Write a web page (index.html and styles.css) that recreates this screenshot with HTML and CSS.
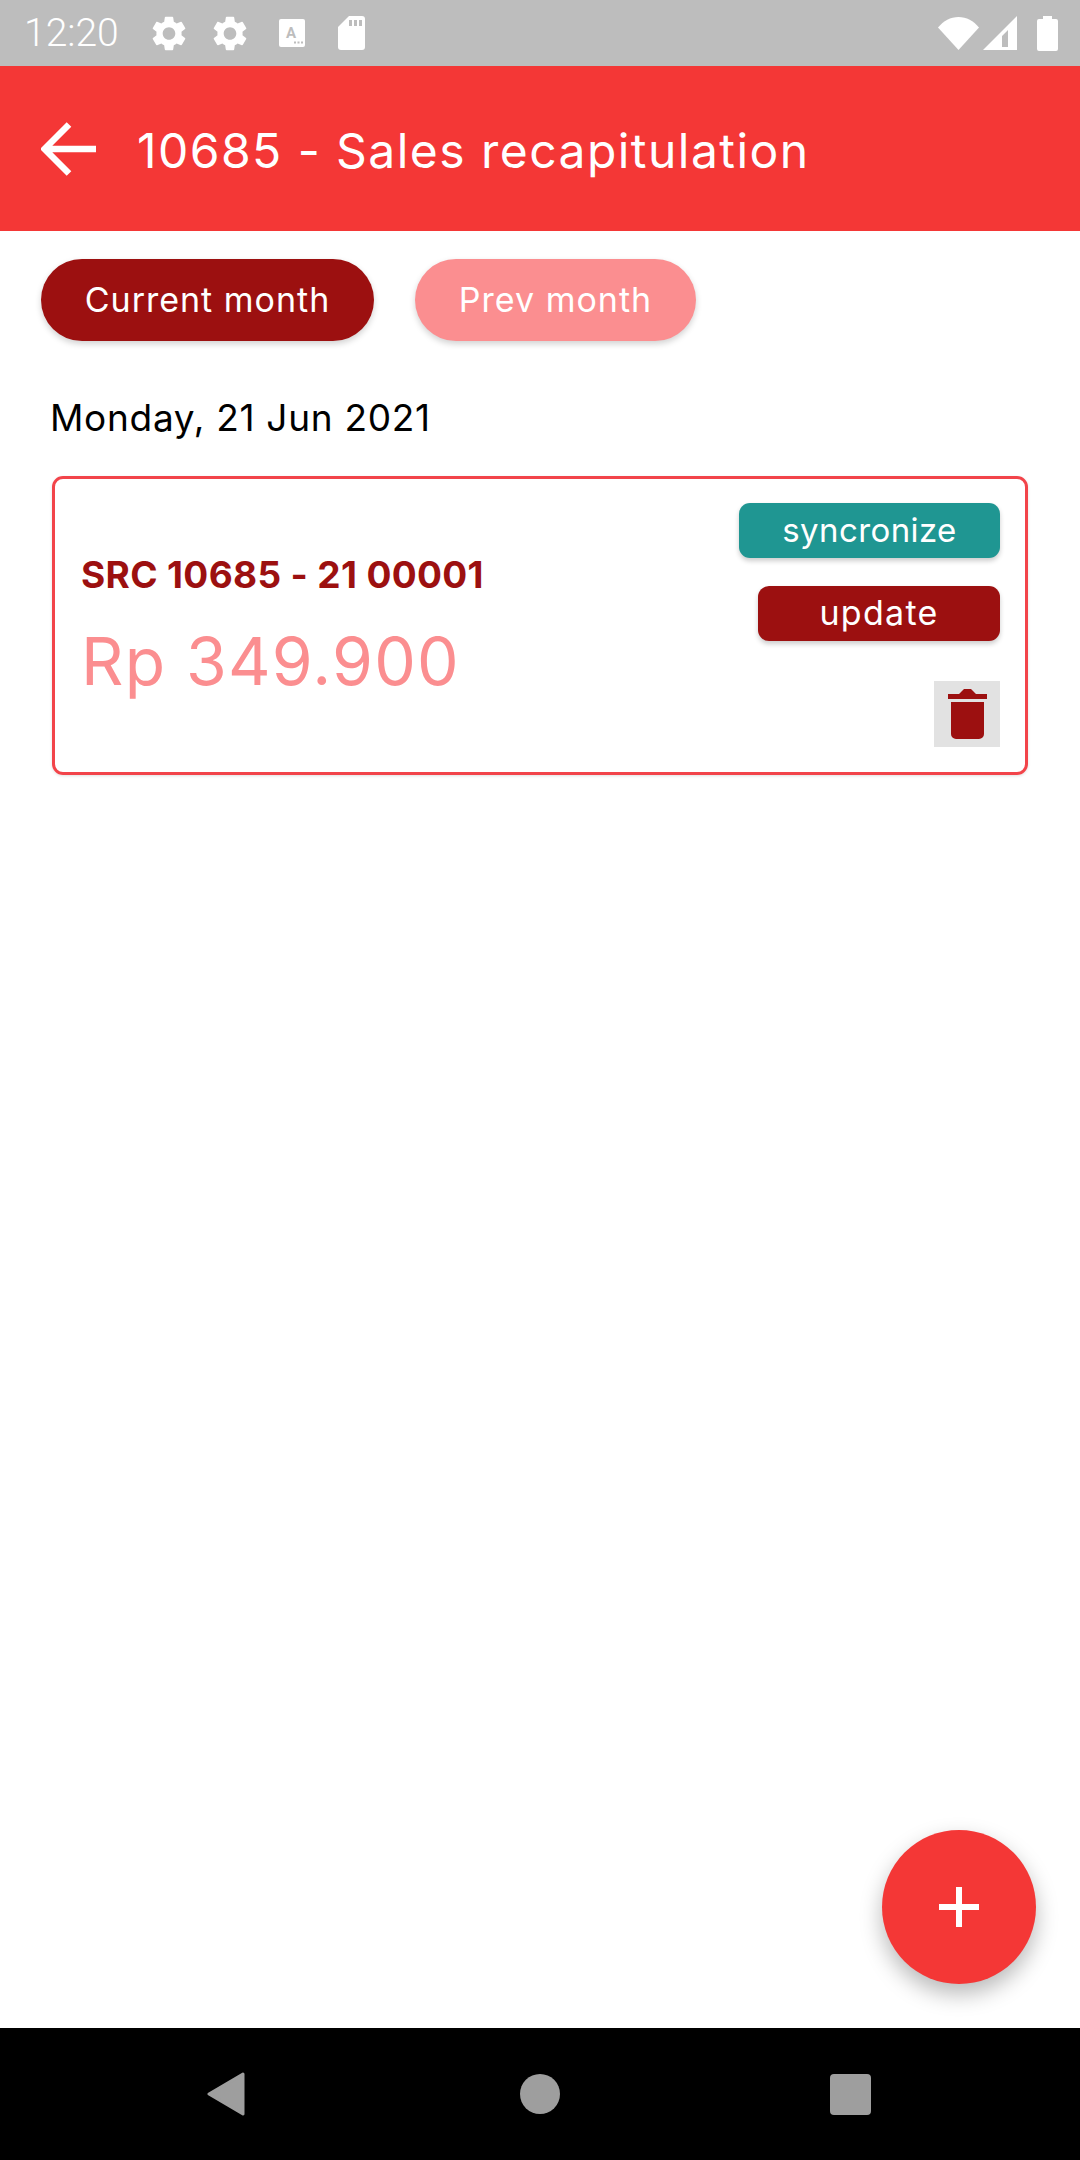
FILE: index.html
```html
<!DOCTYPE html>
<html lang="en">
<head>
<meta charset="utf-8">
<title>Sales recapitulation</title>
<link rel="stylesheet" href="styles.css">
</head>
<body>
<div class="screen">
  <header class="status">
    <span class="clock">12:20</span>
    <svg class="ico gear gear-a" viewBox="2.4 2 19.2 20"><path fill-rule="evenodd" d="M19.14 12.94c.04-.3.06-.61.06-.94 0-.32-.02-.64-.07-.94l2.03-1.58a.49.49 0 0 0 .12-.61l-1.92-3.32a.488.488 0 0 0-.59-.22l-2.39.96c-.5-.38-1.03-.7-1.62-.94l-.36-2.54a.484.484 0 0 0-.48-.41h-3.84c-.24 0-.43.17-.47.41l-.36 2.54c-.59.24-1.13.57-1.62.94l-2.39-.96c-.22-.08-.47 0-.59.22L2.74 8.87c-.12.21-.08.47.12.61l2.03 1.58c-.05.3-.09.63-.09.94s.02.64.07.94l-2.03 1.58a.49.49 0 0 0-.12.61l1.92 3.32c.12.22.37.29.59.22l2.39-.96c.5.38 1.03.7 1.62.94l.36 2.54c.05.24.24.41.48.41h3.84c.24 0 .44-.17.47-.41l.36-2.54c.59-.24 1.13-.56 1.62-.94l2.39.96c.22.08.47 0 .59-.22l1.92-3.32c.12-.22.07-.47-.12-.61l-2.01-1.58zM12 15.6c-1.98 0-3.6-1.62-3.6-3.6s1.62-3.6 3.6-3.6 3.6 1.62 3.6 3.6-1.62 3.6-3.6 3.6z"/></svg>
    <svg class="ico gear gear-b" viewBox="2.4 2 19.2 20"><path fill-rule="evenodd" d="M19.14 12.94c.04-.3.06-.61.06-.94 0-.32-.02-.64-.07-.94l2.03-1.58a.49.49 0 0 0 .12-.61l-1.92-3.32a.488.488 0 0 0-.59-.22l-2.39.96c-.5-.38-1.03-.7-1.62-.94l-.36-2.54a.484.484 0 0 0-.48-.41h-3.84c-.24 0-.43.17-.47.41l-.36 2.54c-.59.24-1.13.57-1.62.94l-2.39-.96c-.22-.08-.47 0-.59.22L2.74 8.87c-.12.21-.08.47.12.61l2.03 1.58c-.05.3-.09.63-.09.94s.02.64.07.94l-2.03 1.58a.49.49 0 0 0-.12.61l1.92 3.32c.12.22.37.29.59.22l2.39-.96c.5.38 1.03.7 1.62.94l.36 2.54c.05.24.24.41.48.41h3.84c.24 0 .44-.17.47-.41l.36-2.54c.59-.24 1.13-.56 1.62-.94l2.39.96c.22.08.47 0 .59-.22l1.92-3.32c.12-.22.07-.47-.12-.61l-2.01-1.58zM12 15.6c-1.98 0-3.6-1.62-3.6-3.6s1.62-3.6 3.6-3.6 3.6 1.62 3.6 3.6-1.62 3.6-3.6 3.6z"/></svg>
    <svg class="ico font-ico" viewBox="0 0 26 28"><rect width="26" height="28" rx="2"/><text class="font-a" x="12" y="19">A</text><rect class="cut" x="15" y="22.5" width="2" height="2"/><rect class="cut" x="18.5" y="22.5" width="2" height="2"/><rect class="cut" x="22" y="22.5" width="2" height="2"/></svg>
    <svg class="ico sd-ico" viewBox="0 0 27 34"><path d="M11 0h13a3 3 0 0 1 3 3v28a3 3 0 0 1-3 3H3a3 3 0 0 1-3-3V11z"/><rect class="cut" x="11" y="4" width="3" height="6"/><rect class="cut" x="16" y="4" width="3" height="6"/><rect class="cut" x="21" y="4" width="3" height="6"/></svg>
    <span class="status-gap"></span>
    <svg class="ico wifi-ico" viewBox="0 0 41 33"><path d="M0 10.5C5.5 4 12.5 0 20.5 0S35.5 4 41 10.5L20.5 33z"/></svg>
    <svg class="ico signal-ico" viewBox="0 0 34 34"><path fill-rule="evenodd" d="M34 0v34H0zM25 14l-6 6v11h6z"/></svg>
    <svg class="ico battery-ico" viewBox="0 0 21 35"><path d="M6 0h9v3h4a2 2 0 0 1 2 2v28a2 2 0 0 1-2 2H2a2 2 0 0 1-2-2V5a2 2 0 0 1 2-2h4z"/></svg>
  </header>

  <div class="appbar">
    <svg class="back" viewBox="0 0 55 54"><path d="M55 27H5M28 2.500 3.500 27 28 51.500"/></svg>
    <h1 class="title">10685 - Sales recapitulation</h1>
  </div>

  <main class="content">
    <div class="tabs">
      <button class="tab tab-on">Current month</button>
      <button class="tab tab-off">Prev month</button>
    </div>
    <p class="date">Monday, 21 Jun 2021</p>
    <section class="card">
      <div class="card-info">
        <div class="code">SRC 10685 - 21 00001</div>
        <div class="price">Rp 349.900</div>
      </div>
      <div class="card-actions">
        <button class="act act-sync">syncronize</button>
        <button class="act act-update">update</button>
        <button class="trash">
          <svg class="trash-ico" viewBox="0 0 39 50"><path d="M0 10V5h11l3-3 2-2h7l2 2 3 3h11v5zM3 13h33v32a5 5 0 0 1-5 5H8a5 5 0 0 1-5-5z"/></svg>
        </button>
      </div>
    </section>
    <button class="fab">
      <svg class="plus" viewBox="0 0 40 40"><path d="M20 0v40M0 20h40"/></svg>
    </button>
  </main>

  <footer class="navbar">
    <svg class="nav-ico nav-back" viewBox="0 0 38 44"><path d="M36 2 2 22l34 20z"/></svg>
    <span class="nav-home"></span>
    <span class="nav-recent"></span>
  </footer>
</div>
</body>
</html>
```
FILE: styles.css
```css
* { box-sizing: border-box; }
html, body { margin: 0; padding: 0; }
body { background: #fff; font-family: Inter, "Liberation Sans", sans-serif; }
button { font-family: inherit; border: 0; padding: 0; }

.screen { width: 1080px; height: 2160px; display: flex; flex-direction: column; overflow: hidden; }

/* status bar */
.status { height: 66px; flex: none; background: #bdbdbd; display: flex; align-items: center; padding: 0 22px 0 24px; }
.clock { font-family: Roboto, sans-serif; font-size: 39px; color: #fff; font-weight: 300; width: 128px; }
.ico { display: block; fill: #fff; flex: none; }
.cut { fill: #bdbdbd; }
.gear { width: 34px; height: 35px; }
.gear-a { margin-right: 27px; }
.gear-b { margin-right: 32px; }
.font-ico { width: 26px; height: 28px; margin-right: 33px; }
.font-a { font-family: Roboto, sans-serif; font-size: 15px; font-weight: 700; fill: #bdbdbd; text-anchor: middle; }
.sd-ico { width: 27px; height: 34px; }
.status-gap { flex: 1; }
.wifi-ico { width: 41px; height: 33px; margin-right: 4px; }
.signal-ico { width: 34px; height: 34px; margin-right: 20px; }
.battery-ico { width: 21px; height: 35px; }

/* app bar */
.appbar { height: 165px; flex: none; background: #f43736; display: flex; align-items: center; padding-left: 41px; }
.back { width: 55px; height: 54px; fill: none; stroke: #fff; stroke-width: 6.500; margin-right: 41px; flex: none; }
.title { margin: 3px 0 0; font-size: 48px; font-weight: 400; color: #fff; letter-spacing: 1.450px; white-space: nowrap; }

/* content */
.content { flex: 1; position: relative; padding: 28px 52px 0 41px; }
.tabs { display: flex; gap: 41px; }
.tab { height: 82px; padding-bottom: 2px; border-radius: 41px; color: #fff; font-size: 34px; font-weight: 400; letter-spacing: 1px; box-shadow: 0 3px 6px rgba(0,0,0,.18); }
.tab-on { width: 333px; background: #9c1010; }
.tab-off { width: 281px; background: #fb8e90; }
.date { margin: 52px 0 0 9px; font-size: 37px; line-height: 50px; color: #000; font-weight: 400; letter-spacing: 0.700px; }
.card { margin: 33px 0 0 11px; height: 299px; border: 3px solid #f2444a; border-radius: 11px; display: flex; justify-content: space-between; box-shadow: 0 1px 3px rgba(0,0,0,.12); }
.card-info { padding: 73px 0 0 26px; }
.code { font-size: 37px; line-height: 46px; font-weight: 700; color: #9c1010; letter-spacing: 0.350px; }
.price { margin-top: 23px; font-size: 66px; line-height: 80px; color: #fb8e90; font-weight: 400; letter-spacing: 1.200px; }
.card-actions { display: flex; flex-direction: column; align-items: flex-end; padding: 24px 25px 0 0; }
.act { height: 55px; padding-bottom: 2px; border-radius: 11px; color: #fff; font-size: 33px; box-shadow: 0 3px 5px rgba(0,0,0,.2); }
.act-sync { width: 261px; background: #1f9692; letter-spacing: 0.400px; }
.act-update { width: 242px; background: #9c1010; margin-top: 28px; font-size: 34px; letter-spacing: 1.300px; }
.trash { margin-top: 40px; width: 66px; height: 66px; background: #e2e2e2; display: flex; align-items: center; justify-content: center; }
.trash-ico { width: 39px; height: 50px; fill: #9c1010; display: block; }

/* fab */
.fab { position: absolute; left: 882px; top: 1599px; width: 154px; height: 154px; border-radius: 50%; background: #f43736; display: flex; align-items: center; justify-content: center; box-shadow: 0 10px 22px rgba(0,0,0,.28); }
.plus { width: 40px; height: 40px; stroke: #fff; stroke-width: 6; fill: none; display: block; }

/* nav */
.navbar { height: 132px; flex: none; background: #000; display: flex; align-items: center; padding-left: 207px; }
.nav-ico { display: block; }
.nav-back { width: 38px; height: 44px; fill: #9e9e9e; stroke: #9e9e9e; stroke-width: 3; stroke-linejoin: round; }
.nav-home { width: 40px; height: 40px; border-radius: 50%; background: #9e9e9e; margin-left: 275px; }
.nav-recent { width: 41px; height: 41px; border-radius: 4px; background: #9e9e9e; margin-left: 270px; }
```
